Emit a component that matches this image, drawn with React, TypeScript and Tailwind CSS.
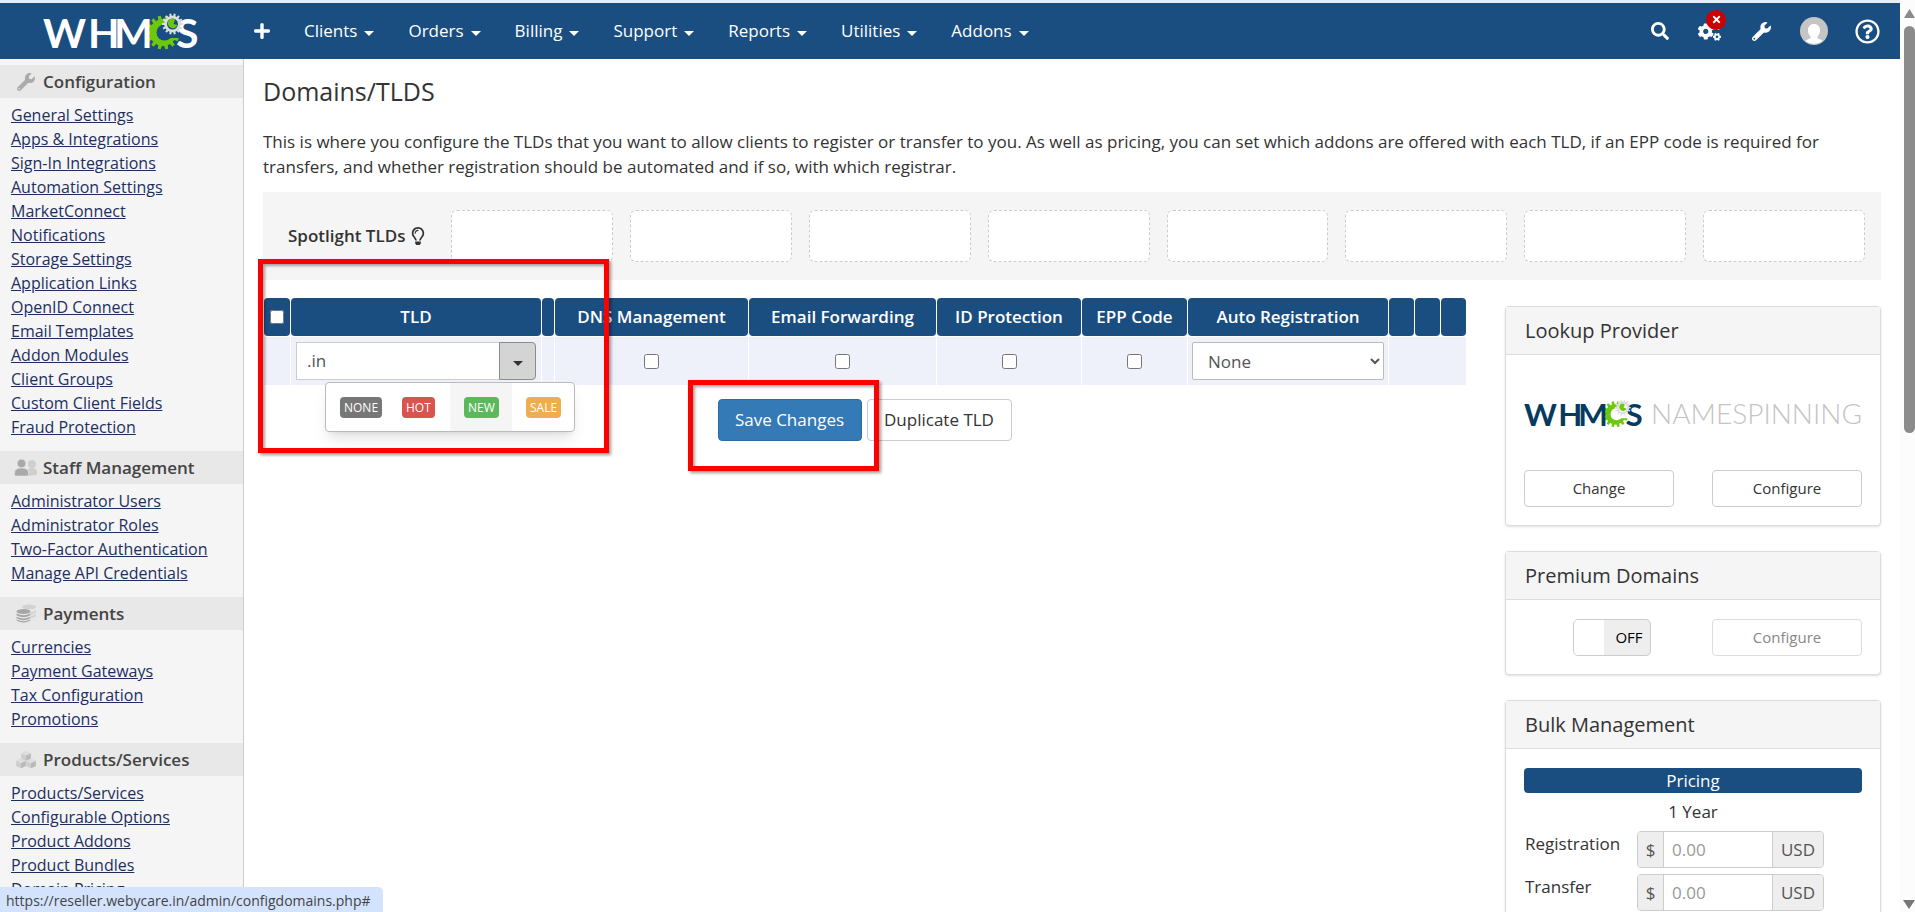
import { useState } from 'react';
import type { ReactNode } from 'react';
import {
  FaCogs,
  FaPlus,
  FaRegLightbulb,
  FaRegQuestionCircle,
  FaSearch,
  FaTimes,
  FaWrench,
} from 'react-icons/fa';

const navItems = ['Clients', 'Orders', 'Billing', 'Support', 'Reports', 'Utilities', 'Addons'];

const sidebarSections = [
  {
    title: 'Configuration',
    icon: <FaWrench size={18} className="text-[#ababab]" />,
    links: [
      'General Settings',
      'Apps & Integrations',
      'Sign-In Integrations',
      'Automation Settings',
      'MarketConnect',
      'Notifications',
      'Storage Settings',
      'Application Links',
      'OpenID Connect',
      'Email Templates',
      'Addon Modules',
      'Client Groups',
      'Custom Client Fields',
      'Fraud Protection',
    ],
  },
  {
    title: 'Staff Management',
    icon: <StaffIcon />,
    links: ['Administrator Users', 'Administrator Roles', 'Two-Factor Authentication', 'Manage API Credentials'],
  },
  {
    title: 'Payments',
    icon: <CoinsIcon />,
    links: ['Currencies', 'Payment Gateways', 'Tax Configuration', 'Promotions'],
  },
  {
    title: 'Products/Services',
    icon: <BoxesIcon />,
    links: ['Products/Services', 'Configurable Options', 'Product Addons', 'Product Bundles', 'Domain Pricing'],
  },
];

const columns = [
  { label: '', width: 'w-[26px]' },
  { label: 'TLD', width: 'w-[250px]' },
  { label: '', width: 'w-[12px]' },
  { label: 'DNS Management', width: 'w-[193px]' },
  { label: 'Email Forwarding', width: 'w-[187px]' },
  { label: 'ID Protection', width: 'w-[144px]' },
  { label: 'EPP Code', width: 'w-[105px]' },
  { label: 'Auto Registration', width: 'w-[200px]' },
  { label: '', width: 'w-[25px]' },
  { label: '', width: 'w-[25px]' },
  { label: '', width: 'w-[25px]' },
];

const tags = [
  { label: 'NONE', color: 'bg-[#777]' },
  { label: 'HOT', color: 'bg-[#d9534f]' },
  { label: 'NEW', color: 'bg-[#5cb85c]' },
  { label: 'SALE', color: 'bg-[#f0ad4e]' },
];

function Caret() {
  return (
    <svg width="10" height="5" viewBox="0 0 10 5" className="mt-1">
      <path d="M0 0h10L5 5z" fill="currentColor" />
    </svg>
  );
}

function StaffIcon() {
  return (
    <svg width="24" height="18" viewBox="0 0 24 18">
      <g fill="#cfcfcf">
        <circle cx="18" cy="5" r="4" />
        <path d="M13 17V13q0-4 5-4t5 4v2q0 1-1 1z" />
      </g>
      <g fill="#a9a9a9" stroke="#e8e8e8" strokeWidth="0.6">
        <circle cx="7.500" cy="4.500" r="4.300" />
        <path d="M0.500 15.500V14q0-5 7-5t7 5v1.500q0 1.500-1.500 1.500H2q-1.500 0-1.500-1.500z" />
      </g>
    </svg>
  );
}

function CoinsIcon() {
  return (
    <svg width="20" height="19" viewBox="0 0 20 19">
      <g fill="#d2d2d2">
        <ellipse cx="13" cy="3" rx="7" ry="2.500" />
        <path d="M14 8.500q4-.5 6-2.500v2q-1 2-5 2.500zM15 12q3-.5 5-2v2q-1 1.500-5 2z" />
      </g>
      <g fill="#a6a6a6">
        <ellipse cx="7.500" cy="7.500" rx="7" ry="2.500" />
        <path d="M.5 9.500q7 3.500 14 0v1.800q-7 4-14 0zM.5 12.700q7 3.500 14 0v1.600q-7 4-14 0zM.5 15.600q7 3.500 14 0v1q-7 4-14 0z" />
      </g>
    </svg>
  );
}

function BoxesIcon() {
  return (
    <svg width="20" height="18" viewBox="0 0 20 18">
      {[[10, 5], [5, 12.5], [15, 12.5]].map(([x, y]) => (
        <g key={x} transform={`translate(${x} ${y})`}>
          <path d="M-4.800-2.500L0-4.800 4.800-2.500V2.500L0 4.800-4.800 2.500z" fill="#cdcdcd" />
          <path d="M-4.800-2.500L0-4.800 4.800-2.500 0-.2z" fill="#dedede" />
          <path d="M0-.2L4.800-2.500V2.500L0 4.800z" fill="#bababa" />
        </g>
      ))}
    </svg>
  );
}

// Points of a toothed wheel centred on cx, cy
function gear(cx: number, cy: number, outer: number, inner: number, teeth: number) {
  const step = (Math.PI * 2) / teeth;
  const points: string[] = [];
  for (let i = 0; i < teeth; i++) {
    const corners = [
      [-0.3, inner],
      [-0.2, outer],
      [0.2, outer],
      [0.3, inner],
    ];
    corners.forEach(([t, r]) => {
      const a = (i + t) * step;
      points.push(`${(cx + Math.cos(a) * r).toFixed(2)} ${(cy + Math.sin(a) * r).toFixed(2)}`);
    });
  }
  return `M${points.join('L')}Z`;
}

function Logo({ width, height, color, back }: { width: number; height: number; color: string; back: string }) {
  return (
    <svg width={width} height={height} viewBox="0 0 156 36" aria-label="WHMCS" className="shrink-0 overflow-visible">
      <path d={gear(120, 19.5, 17, 13.5, 14)} fill="#6cc70d" />
      <circle cx="121.500" cy="19.500" r="8" fill={back} />
      <path d="M122 19L142 9v16h-15z" fill={back} />
      <g fill={color} fontFamily="Lato" fontWeight="700" fontSize="41">
        <text x="0" y="35">W</text>
        <text x="45" y="35">H</text>
        <text x="71" y="35">M</text>
        <text x="133" y="35">S</text>
      </g>
      <path d={gear(129.5, 11, 10.5, 8.2, 14)} fill="#dcdfe0" />
      <circle cx="129.500" cy="11" r="5.500" fill={back} />
      <path d="M126 7a5 5 0 1 0 8.500 5l-4-1 1.500-4.500a5 5 0 0 0-6 .5z" fill="#6cc70d" />
    </svg>
  );
}

function Panel({ title, children }: { title: string; children: ReactNode }) {
  return (
    <section className="rounded-[4px] border border-[#ddd] bg-white shadow-sm">
      <h2 className="flex h-12 items-center border-b border-[#ddd] bg-[#f5f5f5] px-[19px] text-[20px]">{title}</h2>
      <div className="px-[18px] pt-[19px] pb-[18px]">{children}</div>
    </section>
  );
}

function PriceRow({ label }: { label: string }) {
  const id = label.toLowerCase();
  return (
    <div className="flex h-[37px]">
      <label htmlFor={id} className="w-[113px] pl-px text-[17px]">
        {label}
      </label>
      <div className="flex w-[187px] overflow-hidden rounded-[4px] border border-[#ccc] text-[17px] text-[#555]">
        <span className="flex w-[26px] items-center justify-center border-r border-[#ccc] bg-[#eee]">$</span>
        <input id={id} placeholder="0.00" className="min-w-0 flex-1 px-2 placeholder:text-[#999]" />
        <span className="flex w-[51px] items-center justify-center border-l border-[#ccc] bg-[#eee]">USD</span>
      </div>
    </div>
  );
}

export default function App() {
  const [tld, setTld] = useState('.in');
  const [hovered, setHovered] = useState('NEW');

  return (
    <div className="relative flex h-screen overflow-hidden bg-white font-['Open_Sans',sans-serif] text-[#333]">
      <div className="flex min-w-0 flex-1 flex-col">
        {/* Top bar */}
        <header className="flex h-[59px] shrink-0 items-center border-t-3 border-[#e6edf4] bg-[#1a4d80] text-[17px] text-white">
          <a href="#" className="ml-[43px]">
            <Logo width={156} height={36} color="#fff" back="#1a4d80" />
          </a>
          <button aria-label="Add" className="ml-[54px]">
            <FaPlus size={18} />
          </button>
          <nav className="ml-[33px] flex gap-[34px]">
            {navItems.map((item) => (
              <a key={item} href="#" className="flex items-center gap-[7px]">
                {item}
                <Caret />
              </a>
            ))}
          </nav>
          <div className="mr-5 ml-auto flex items-center">
            <button aria-label="Search">
              <FaSearch size={18} />
            </button>
            <button aria-label="System" className="relative ml-[29px]">
              <FaCogs size={23} />
              <span className="absolute -top-[10px] left-2 flex size-5 items-center justify-center rounded-full bg-[#c00]">
                <FaTimes size={11} />
              </span>
            </button>
            <button aria-label="Setup" className="ml-[31px]">
              <FaWrench size={19} />
            </button>
            <button aria-label="Account" className="ml-[29px]">
              <svg width="28" height="28" viewBox="0 0 28 28">
                <circle cx="14" cy="14" r="14" fill="#c5c5c5" />
                <path d="M14 7c4 0 6.300 3 6 7-.2 2.500-1 4-2.500 5.200v2c1 .8 3.500 1.200 5 2.800A14 14 0 0 1 5.500 24c1.500-1.600 4-2 5-2.800v-2C9 18 8.200 16.500 8 14c-.3-4 2-7 6-7z" fill="#fff" />
              </svg>
            </button>
            <button aria-label="Help" className="ml-[27px]">
              <FaRegQuestionCircle size={25} />
            </button>
          </div>
        </header>

        <div className="flex min-h-0 flex-1">
          {/* Sidebar */}
          <aside className="w-[244px] shrink-0 overflow-hidden border-r border-[#ccc] bg-[#f5f5f5] pt-[6px]">
            {sidebarSections.map((section) => (
              <section key={section.title}>
                <h2 className="flex h-[33px] items-center bg-[#e8e8e8] text-[17px] font-semibold text-[#444]">
                  <span className="flex w-[43px] justify-center pl-2">{section.icon}</span>
                  {section.title}
                </h2>
                <ul className="pt-[5px] pb-3">
                  {section.links.map((link) => (
                    <li key={link} className="h-6 pl-[11px] text-[16px] leading-6 text-[#1d2f5f]">
                      <a href="#" className="underline">
                        {link}
                      </a>
                    </li>
                  ))}
                </ul>
              </section>
            ))}
          </aside>

          <main className="min-w-0 flex-1 px-[19px]">
            <h1 className="mt-4 text-[25px] leading-8">Domains/TLDS</h1>
            <p className="mt-[22px] text-[17px] leading-[25px]">
              This is where you configure the TLDs that you want to allow clients to register or transfer to you. As well
              as pricing, you can set which addons are offered with each TLD, if an EPP code is required for transfers, and
              whether registration should be automated and if so, with which registrar.
            </p>

            {/* Spotlight slots */}
            <div className="mt-[13px] flex h-[88px] items-center bg-[#f5f5f5] pr-4">
              <div className="flex w-[188px] shrink-0 items-center gap-1 pl-[25px] text-[17px] font-semibold">
                Spotlight TLDs
                <FaRegLightbulb size={18} />
              </div>
              <div className="grid flex-1 grid-cols-8 gap-[17px]">
                {Array.from({ length: 8 }, (_, i) => (
                  <div key={i} className="h-[52px] rounded-[6px] border border-dashed border-[#ccc] bg-white" />
                ))}
              </div>
            </div>

            <div className="mt-[17px] flex gap-[39px]">
              <div className="min-w-0 flex-1">
                <table className="w-full table-fixed border-separate border-spacing-px text-[17px]">
                  <thead>
                    <tr>
                      {columns.map((col, i) => (
                        <th
                          key={i}
                          className={`${col.width} h-[38px] rounded-[4px] bg-[#1a4d80] p-0 text-center font-semibold whitespace-nowrap text-white`}
                        >
                          {i === 0 ? (
                            <input type="checkbox" aria-label="Select all" className="mx-auto block size-[14px]" />
                          ) : (
                            col.label
                          )}
                        </th>
                      ))}
                    </tr>
                  </thead>
                  <tbody>
                    <tr className="h-12">
                      <td className="bg-[#eef1fa]" />
                      <td className="bg-[#eef1fa] px-[5px] py-0">
                        <div className="relative flex h-[38px] items-stretch text-[#555]">
                          <input
                            aria-label="TLD"
                            value={tld}
                            onChange={(e) => setTld(e.target.value)}
                            className="min-w-0 flex-1 border border-r-0 border-[#ccc] bg-white px-[10px]"
                          />
                          <button
                            aria-label="Tags"
                            className="flex w-[37px] items-center justify-center rounded-r-[4px] border border-[#8c8c8c] bg-[#d4d4d4] text-[#333]"
                          >
                            <Caret />
                          </button>
                          <ul className="absolute top-10 left-[29px] z-10 grid h-[50px] w-[250px] grid-cols-4 overflow-hidden rounded-[4px] border border-[#bbb] bg-white shadow-lg">
                            {tags.map((tag) => (
                              <li
                                key={tag.label}
                                onMouseEnter={() => setHovered(tag.label)}
                                className={`flex items-center pl-[14px] ${hovered === tag.label ? 'bg-[#f5f5f5]' : ''}`}
                              >
                                <a
                                  href="#"
                                  className={`rounded-[4px] px-1 text-[12px] leading-[21px] text-white ${tag.color}`}
                                >
                                  {tag.label}
                                </a>
                              </li>
                            ))}
                          </ul>
                        </div>
                      </td>
                      <td className="bg-[#eef1fa]" />
                      {['DNS Management', 'Email Forwarding', 'ID Protection', 'EPP Code'].map((name) => (
                        <td key={name} className="bg-[#eef1fa] p-0">
                          <input type="checkbox" aria-label={name} className="mx-auto block size-[15px]" />
                        </td>
                      ))}
                      <td className="bg-[#eef1fa] px-1 py-0">
                        <select
                          aria-label="Auto Registration"
                          className="block h-[38px] w-full rounded-[2px] border border-[#bbb] bg-white pl-[11px] text-[#555]"
                        >
                          <option>None</option>
                        </select>
                      </td>
                      <td colSpan={3} className="bg-[#eef1fa]" />
                    </tr>
                  </tbody>
                </table>

                <div className="mt-[13px] flex justify-center gap-[5px] text-[17px]">
                  <div className="relative">
                    <button className="h-[42px] w-36 rounded-[4px] border border-[#2e6da4] bg-[#337ab7] text-white">
                      Save Changes
                    </button>
                    <div className="pointer-events-none absolute -top-[19px] -left-[30px] z-20 h-[91px] w-[191px] border-5 border-[#f00] shadow-[2px_2px_3px_rgba(0,0,0,0.4),inset_2px_2px_3px_rgba(0,0,0,0.35)]" />
                  </div>
                  <button className="h-[42px] w-[145px] rounded-[4px] border border-[#ccc] bg-white">Duplicate TLD</button>
                </div>
              </div>

              {/* Right column */}
              <div className="mt-[9px] flex w-[376px] shrink-0 flex-col gap-[25px]">
                <Panel title="Lookup Provider">
                  <div className="mt-[25px] mb-[43px] flex h-[28px] items-center justify-between">
                    <Logo width={119} height={28} color="#063a5e" back="#fff" />
                    <span className="font-['Lato'] text-[28px] leading-9 font-light whitespace-nowrap text-[#c4c4c4]">
                      NAMESPINNING
                    </span>
                  </div>
                  <div className="flex justify-between text-[15px]">
                    <button className="h-[37px] w-[150px] rounded-[4px] border border-[#ccc]">Change</button>
                    <button className="h-[37px] w-[150px] rounded-[4px] border border-[#ccc]">Configure</button>
                  </div>
                </Panel>

                <Panel title="Premium Domains">
                  <div className="flex justify-between text-[15px]">
                    <div className="flex w-[150px] justify-center pl-[26px]">
                      <button
                        role="switch"
                        aria-checked="false"
                        aria-label="Premium Domains"
                        className="flex h-[37px] w-[78px] overflow-hidden rounded-[5px] border border-[#ccc] bg-[#eee] text-black"
                      >
                        <span className="h-full w-[30px] bg-white" />
                        <span className="flex h-full flex-1 items-center justify-center pl-1">OFF</span>
                      </button>
                    </div>
                    <button disabled className="h-[37px] w-[150px] rounded-[4px] border border-[#ddd] text-[#888]">
                      Configure
                    </button>
                  </div>
                </Panel>

                <Panel title="Bulk Management">
                  <h3 className="rounded-[4px] bg-[#1a4d80] text-center text-[17px] leading-[25px] text-white">Pricing</h3>
                  <div className="my-[6px] text-center text-[17px] leading-[26px]">1 Year</div>
                  <div className="flex flex-col gap-[6px]">
                    <PriceRow label="Registration" />
                    <PriceRow label="Transfer" />
                  </div>
                </Panel>
              </div>
            </div>
          </main>
        </div>
      </div>

      {/* Scroll bar */}
      <div className="flex w-[15px] shrink-0 flex-col items-end bg-[#fcfcfc] pt-[9px] pb-[2px]">
        <svg width="11" height="10" viewBox="0 0 11 10">
          <path d="M5.500 0L11 9H0z" fill="#8b8b8b" />
        </svg>
        <div className="mt-[7px] h-[407px] w-[11px] rounded-full bg-[#8b8b8b]" />
        <svg width="12" height="10" viewBox="0 0 12 10" className="mt-auto">
          <path d="M0 0h12L6 9z" fill="#777" />
        </svg>
      </div>

      {/* Highlight around the TLD cell */}
      <div className="pointer-events-none absolute top-[259px] left-[258px] z-20 h-[194px] w-[351px] border-5 border-[#f00] shadow-[2px_2px_3px_rgba(0,0,0,0.4),inset_2px_2px_3px_rgba(0,0,0,0.35)]" />

      {/* Link status */}
      <div className="absolute bottom-0 left-0 z-30 h-[25px] w-[383px] rounded-tr-[5px] bg-[#d3e3fd] pl-[6px] text-[14px] leading-[28px] text-[#444]">
        https://reseller.webycare.in/admin/configdomains.php#
      </div>
    </div>
  );
}
